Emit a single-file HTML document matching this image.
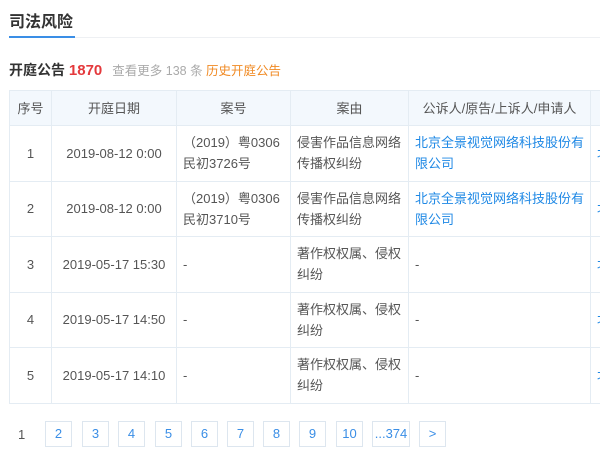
<!DOCTYPE html>
<html><head><meta charset="utf-8"><style>
*{margin:0;padding:0;box-sizing:border-box}
body{width:600px;height:449px;overflow:hidden;background:#fff;font-family:"Liberation Sans","Noto Sans CJK SC",sans-serif;color:#333;position:relative}
.t{position:absolute;left:9px;top:8px;font-size:16px;font-weight:bold;color:#333}
.ul{position:absolute;left:9px;top:36px;width:66px;height:2px;background:#3a8ee6}
.hl{position:absolute;left:9px;top:37px;width:591px;height:1px;background:#eef0f3}
.sub{position:absolute;left:9px;top:60px;font-size:14px;font-weight:bold;white-space:nowrap}
.sub .n{color:#e4393c;font-size:15px}
.sub .m{font-weight:normal;font-size:12.5px;color:#aaa;margin-left:10px}
.sub .o{color:#f08a24}
table{position:absolute;left:9px;top:90px;border-collapse:collapse;table-layout:fixed;font-size:13px;width:620px}
td,th{border:1px solid #e4ecf3;padding:0 6px;line-height:21px;vertical-align:middle}
th{background:#f3f8fd;font-weight:normal;height:35px;color:#555;white-space:nowrap;overflow:hidden}
td{height:55.5px;color:#555}
.c{text-align:center}
a{color:#1e88e5;text-decoration:none}
.pg{position:absolute;top:421px;height:26px;border:1px solid #dde6ef;font-size:13px;color:#3a8ee6;text-align:center;line-height:24px}
</style></head><body>
<div class="t">司法风险</div>
<div class="hl"></div><div class="ul"></div>
<div class="sub">开庭公告 <span class="n">1870</span><span class="m">查看更多 138 条 <span class="o">历史开庭公告</span></span></div>
<table>
<colgroup><col style="width:42px"><col style="width:125px"><col style="width:114px"><col style="width:118px"><col style="width:182px"><col style="width:39px"></colgroup>
<tr><th>序号</th><th>开庭日期</th><th>案号</th><th>案由</th><th>公诉人/原告/上诉人/申请人</th><th>被</th></tr>
<tr><td class="c">1</td><td class="c">2019-08-12 0:00</td><td>（2019）粤0306民初3726号</td><td>侵害作品信息网络传播权纠纷</td><td><a>北京全景视觉网络科技股份有限公司</a></td><td><a>北</a></td></tr>
<tr><td class="c">2</td><td class="c">2019-08-12 0:00</td><td>（2019）粤0306民初3710号</td><td>侵害作品信息网络传播权纠纷</td><td><a>北京全景视觉网络科技股份有限公司</a></td><td><a>北</a></td></tr>
<tr><td class="c">3</td><td class="c">2019-05-17 15:30</td><td>-</td><td>著作权权属、侵权纠纷</td><td>-</td><td><a>北</a></td></tr>
<tr><td class="c">4</td><td class="c">2019-05-17 14:50</td><td>-</td><td>著作权权属、侵权纠纷</td><td>-</td><td><a>北</a></td></tr>
<tr><td class="c">5</td><td class="c">2019-05-17 14:10</td><td>-</td><td>著作权权属、侵权纠纷</td><td>-</td><td><a>北</a></td></tr>
</table>
<div style="position:absolute;left:18px;top:427px;font-size:13px;color:#555">1</div>
<div class="pg" style="left:45px;width:27px">2</div>
<div class="pg" style="left:82px;width:27px">3</div>
<div class="pg" style="left:118px;width:27px">4</div>
<div class="pg" style="left:155px;width:27px">5</div>
<div class="pg" style="left:191px;width:27px">6</div>
<div class="pg" style="left:227px;width:27px">7</div>
<div class="pg" style="left:263px;width:27px">8</div>
<div class="pg" style="left:299px;width:27px">9</div>
<div class="pg" style="left:336px;width:27px">10</div>
<div class="pg" style="left:372px;width:38px">...374</div>
<div class="pg" style="left:419px;width:27px">&gt;</div>
</body></html>
